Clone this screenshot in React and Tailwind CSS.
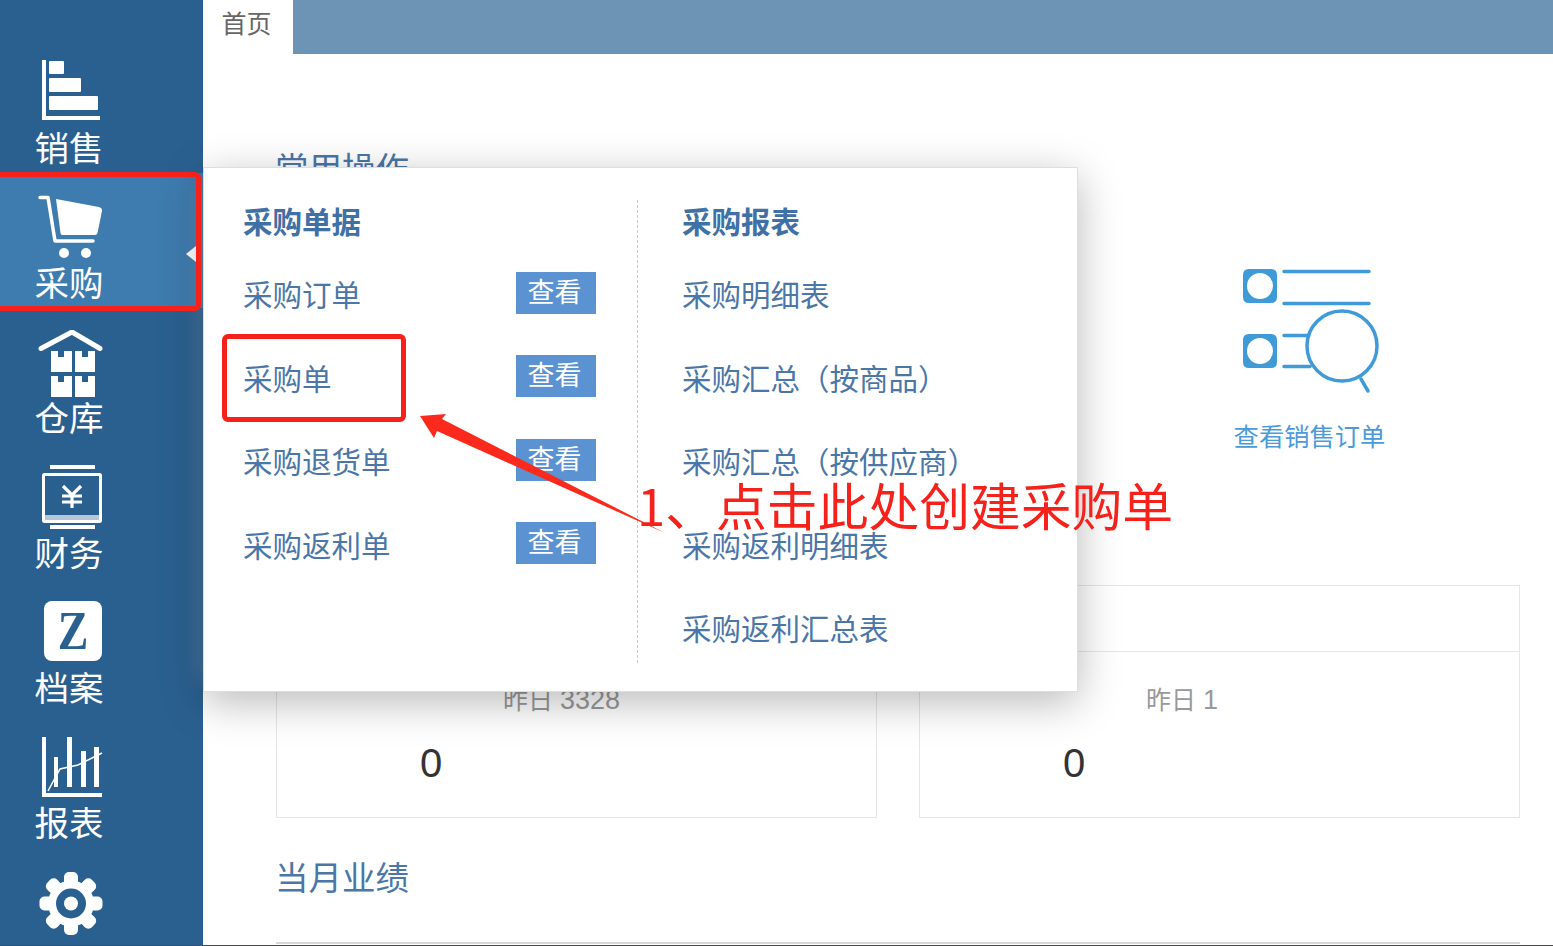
const FONT = '"Liberation Sans","Noto Sans CJK SC",sans-serif';

const SalesIcon = () => (
  <svg width="70" height="68" viewBox="0 0 70 68" fill="#fff">
    <rect x="8" y="0" width="4" height="59" />
    <rect x="8" y="56" width="58" height="4" />
    <rect x="15" y="1" width="15" height="13" rx="1" />
    <rect x="15" y="18" width="32" height="14" rx="1" />
    <rect x="15" y="36" width="49" height="14" rx="1" />
  </svg>
);
const CartIcon = () => (
  <svg width="70" height="68" viewBox="0 0 70 68" fill="#fff">
    <path d="M6 2.500 H14 L21 46 H59" fill="none" stroke="#fff" strokeWidth="3.500" strokeLinecap="round" strokeLinejoin="round" />
    <path d="M22 4 L65 12 Q68.500 13 68 16 L63.500 38 Q63 40 61 40 H28 Q27 40 26.500 38 Z" />
    <circle cx="30" cy="58" r="5" />
    <circle cx="52" cy="58" r="5" />
  </svg>
);
const BoxShape = ({ x, y, w }) => (
  <path d={`M${x} ${y} H${x + 7} V${y + 6} H${x + 13} V${y} H${x + w} V${y + 21} H${x} Z`} />
);
const WarehouseIcon = () => (
  <svg width="70" height="68" viewBox="0 0 70 68" fill="#fff">
    <path d="M7 18.500 L38 2 L66 18.500" fill="none" stroke="#fff" strokeWidth="5" strokeLinecap="round" strokeLinejoin="round" />
    <BoxShape x={17} y={21} w={21} />
    <BoxShape x={41} y={21} w={20} />
    <BoxShape x={17} y={46} w={21} />
    <BoxShape x={41} y={46} w={20} />
  </svg>
);
const FinanceIcon = () => (
  <svg width="70" height="68" viewBox="0 0 70 68" fill="none" stroke="#fff">
    <rect x="16" y="0" width="45" height="4" fill="#fff" stroke="none" />
    <rect x="9.500" y="9.500" width="57" height="47" rx="1" strokeWidth="3" />
    <rect x="9" y="50" width="58" height="6" fill="#ffffff" fillOpacity="0.65" stroke="none" />
    <rect x="16" y="60" width="45" height="4" fill="#fff" stroke="none" />
    <path d="M29 21 L38 30 L47 21 M28 31 H48 M28 37 H48 M38 30 V43" strokeWidth="3.200" />
  </svg>
);
const ChartIcon = () => (
  <svg width="70" height="68" viewBox="0 0 70 68" fill="#fff">
    <rect x="8" y="2" width="4" height="59" />
    <rect x="8" y="58" width="60" height="4" />
    <rect x="20" y="22" width="4" height="30" />
    <rect x="33" y="2" width="5" height="50" />
    <rect x="47" y="16" width="5" height="36" />
    <rect x="60" y="12" width="5" height="40" />
    <path d="M14 56 L26 34 L44 30 L68 18" fill="none" stroke="#fff" strokeWidth="1.500" />
  </svg>
);
const GearIcon = () => (
  <svg width="70" height="68" viewBox="0 0 70 68" fill="#fff">
    {[0, 45, 90, 135, 180, 225, 270, 315].map((a) => (
      <rect key={a} x="30" y="2" width="14" height="14" rx="5" transform={`rotate(${a} 37 33.500)`} />
    ))}
    <circle cx="37" cy="33.500" r="23" />
    <circle cx="37" cy="33.500" r="15" fill="#2a6090" />
    <circle cx="37" cy="33.500" r="7" />
  </svg>
);
const ArchiveIcon = () => (
  <div className="h-[68px] w-[70px] pl-[10px] pt-[1px]">
    <div
      className="flex h-[60px] w-[58px] items-center justify-center rounded-[8px] bg-white text-[54px] leading-none font-bold text-[#2a6090]"
      style={{ fontFamily: '"Liberation Serif",serif' }}
    >
      <span className="scale-x-[0.85]">Z</span>
    </div>
  </div>
);

const navItems = [
  ['销售', <SalesIcon />],
  ['采购', <CartIcon />, true],
  ['仓库', <WarehouseIcon />],
  ['财务', <FinanceIcon />],
  ['档案', <ArchiveIcon />],
  ['报表', <ChartIcon />],
  ['', <GearIcon />],
];

function Sidebar() {
  return (
    <aside className="relative h-full w-[203px] shrink-0 overflow-hidden bg-[#2a6090] pt-[38px]">
      {navItems.map(([label, icon, active]) => (
        <div
          key={label || 'gear'}
          className={`relative h-[135px] pt-[22px] ${active ? 'bg-[#3e7bae]' : ''}`}
        >
          <div className="flex w-[138px] flex-col items-center">
            {icon}
            <div className="h-[42px] text-[34.5px] leading-[42px] whitespace-nowrap text-white">{label}</div>
          </div>
          {active && (
            <div className="absolute top-[73px] right-[7px] h-0 w-0 border-y-[8px] border-r-[10px] border-y-transparent border-r-white" />
          )}
        </div>
      ))}
      <div className="absolute top-[190px] left-full h-[490px] w-[8px] shadow-[0_0_22px_rgba(255,255,255,0.4)]" />
    </aside>
  );
}

const OrderSearchIcon = () => (
  <svg width="140" height="130" viewBox="1240 265 140 130" fill="none" stroke="#3f9bd8">
    <path fillRule="evenodd" d="M1249 269 H1271 Q1277 269 1277 275 V297 Q1277 303 1271 303 H1249 Q1243 303 1243 297 V275 Q1243 269 1249 269 Z M1260 273 A13 13 0 1 0 1260.010 299 A13 13 0 1 0 1260 273 Z" fill="#3f9bd8" stroke="none" />
    <path fillRule="evenodd" d="M1249 334 H1271 Q1277 334 1277 340 V362 Q1277 368 1271 368 H1249 Q1243 368 1243 362 V340 Q1243 334 1249 334 Z M1260 338 A13 13 0 1 0 1260.010 364 A13 13 0 1 0 1260 338 Z" fill="#3f9bd8" stroke="none" />
    <path d="M1284 271.500 H1369 M1284 303.500 H1369 M1284 335.500 H1308 M1284 366.500 H1310" strokeWidth="3.500" strokeLinecap="round" />
    <circle cx="1342" cy="346" r="35" strokeWidth="3.500" />
    <path d="M1361 379 L1368 391" strokeWidth="3.500" strokeLinecap="round" />
  </svg>
);

const StatCard = ({ yesterday }) => (
  <div className="h-[233px] border border-[#e6e6e6] bg-white">
    <div className="h-[66px] border-b border-[#e6e6e6]" />
    <div className="pl-[226px] pt-[33px] text-[25px] leading-[30px] text-[#999]">
      昨日 <span className="text-[27px]">{yesterday}</span>
    </div>
    <div className="pl-[143px] pt-[26px] text-[40px] leading-[44px] text-[#333]">0</div>
  </div>
);

function Main() {
  return (
    <main className="flex min-w-0 flex-1 flex-col">
      <div className="flex h-[54px] shrink-0 bg-[#6d94b5]">
        <div className="flex h-full w-[90px] items-center justify-center bg-white pr-[3px] pb-[4px] text-[25px] text-[#666]">
          首页
        </div>
      </div>
      <div className="flex-1 pr-[33px] pl-[73px]">
        <h2 className="mt-[96px] -ml-px text-[33.5px] leading-[40px] font-normal text-[#4a76a8]">常用操作</h2>
        <div className="mt-[75px] flex justify-end pr-[135px]">
          <div className="flex w-[150px] flex-col items-center">
            <div className="mr-[1px]">
              <OrderSearchIcon />
            </div>
            <div className="mt-[27px] -ml-px text-[25.3px] leading-[30px] whitespace-nowrap text-[#4c9ad8]">查看销售订单</div>
          </div>
        </div>
        <div className="mt-[133px] grid grid-cols-2 gap-[42px]">
          <StatCard yesterday="3328" />
          <StatCard yesterday="1" />
        </div>
        <h2 className="mt-[41px] -ml-px text-[33.5px] leading-[40px] font-normal text-[#4a76a8]">当月业绩</h2>
        <div className="mt-[43px] h-[2px] bg-[#d8d8d8]" />
      </div>
      <div className="h-px shrink-0" />
    </main>
  );
}

const leftRows = ['采购订单', '采购单', '采购退货单', '采购返利单'];
const rightRows = ['采购明细表', '采购汇总（按商品）', '采购汇总（按供应商）', '采购返利明细表', '采购返利汇总表'];

function Popover() {
  return (
    <div className="absolute top-[167px] left-[203px] z-10 flex h-[525px] w-[875px] border border-[#dedede] bg-white pt-[32px] shadow-[0_10px_40px_rgba(0,0,0,0.28)]">
      <div className="h-[463px] w-[433px] pr-[41px] pl-[40px]">
        <div className="mb-[7px] h-[46px] -ml-px text-[29.5px] leading-[46px] font-bold text-[#3f70a6]">采购单据</div>
        {leftRows.map((r) => (
          <div key={r} className="flex h-[83.5px] items-center justify-between text-[29.5px] text-[#4a76a8]">
            <span className="-ml-px pt-[3px]">{r}</span>
            <span className="mb-[4px] flex h-[42px] w-[80px] items-center justify-center bg-[#5b93d2] pr-[3px] text-[27px] text-white">
              查看
            </span>
          </div>
        ))}
      </div>
      <div className="h-[463px] flex-1 border-l border-dashed border-[#c8c8c8] pl-[44px]">
        <div className="mb-[7px] h-[46px] text-[29.5px] leading-[46px] font-bold text-[#3f70a6]">采购报表</div>
        {rightRows.map((r) => (
          <div key={r} className="flex h-[83.5px] items-center pt-[3px] text-[29.5px] whitespace-nowrap text-[#4a76a8]">
            {r}
          </div>
        ))}
      </div>
    </div>
  );
}

function Annotations() {
  return (
    <>
      <div className="absolute top-[172px] -left-[6px] z-20 h-[139px] w-[207px] rounded-[6px] border-[5px] border-[#f5211a]" />
      <div className="absolute top-[334px] left-[222px] z-20 h-[88px] w-[184px] rounded-[6px] border-[5px] border-[#f5211a]" />
      <svg className="absolute top-[400px] left-[410px] z-20" width="270" height="140" viewBox="410 400 270 140">
        <polygon points="420,416 446,414 442,419 665,533 437,431 434,438" fill="#fb2a1c" />
      </svg>
      <div
        className="absolute top-[468px] left-[637px] z-20 text-[50.8px] leading-[72px] whitespace-nowrap text-[#f5211a]"
        style={{ fontFamily: '"Noto Sans CJK SC",sans-serif' }}
      >
        1、点击此处创建采购单
      </div>
    </>
  );
}

export default function App() {
  return (
    <div className="relative flex h-[946px] w-[1553px] overflow-hidden bg-white" style={{ fontFamily: FONT }}>
      <Sidebar />
      <Main />
      <Popover />
      <Annotations />
      <div className="absolute right-0 bottom-0 left-0 z-30 h-px bg-[#4a4a4a]" />
    </div>
  );
}
